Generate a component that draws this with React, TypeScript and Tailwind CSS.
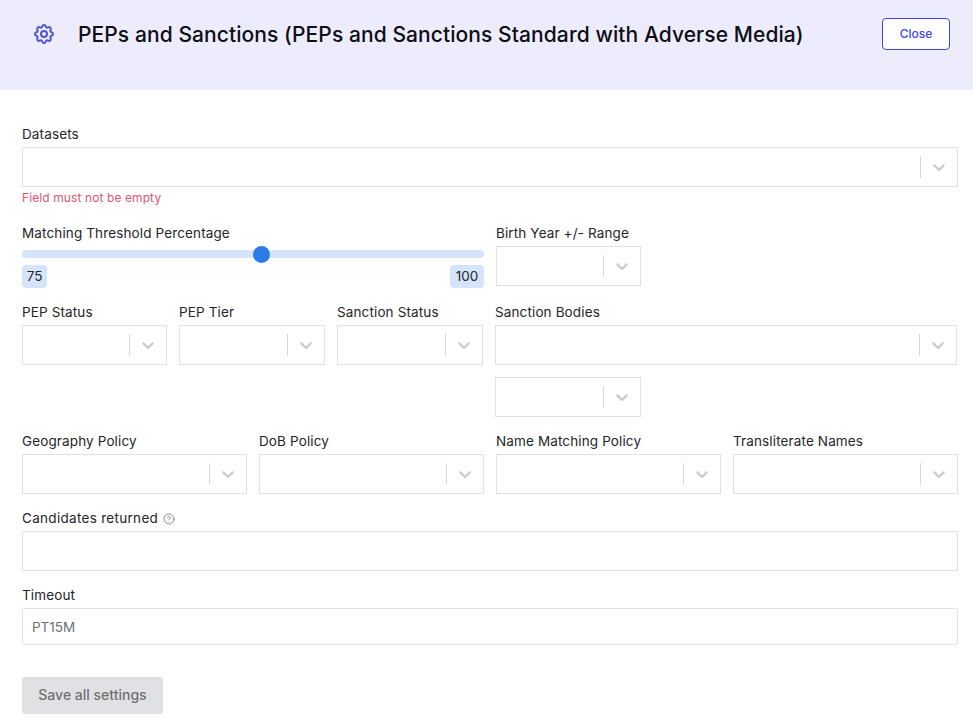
import { CircleHelp } from "lucide-react";
import { HiOutlineCog } from "react-icons/hi";

const labelClass = "block h-[23px] text-[13.5px] leading-[21px] tracking-[0.13px] text-[#25252a]";

function FakeSelect({ className = "" }: { className?: string }) {
  return (
    <div className={`flex h-10 items-center justify-end border border-[#e1e1e1] bg-white ${className}`}>
      <span className="h-[22px] w-px bg-[#d9d9d9]" />
      <span className="px-2 py-2 text-[#cccccc]">
        <svg viewBox="0 0 20 20" width="20" height="20" fill="currentColor" aria-hidden="true">
          <path d="M4.516 7.548c0.436-0.446 1.043-0.481 1.576 0l3.908 3.747 3.908-3.747c0.533-0.481 1.141-0.446 1.576 0 0.436 0.445 0.408 1.197 0 1.615-0.406 0.418-4.695 4.502-4.695 4.502-0.217 0.223-0.502 0.335-0.789 0.335s-0.572-0.112-0.791-0.335c0 0-4.287-4.084-4.695-4.502s-0.436-1.17 0-1.615z" />
        </svg>
      </span>
    </div>
  );
}

function SelectField({ label, className = "" }: { label: string; className?: string }) {
  return (
    <div className={className}>
      <label className={labelClass}>{label}</label>
      <FakeSelect />
    </div>
  );
}

export default function App() {
  return (
    <div className="min-h-[726px] bg-white font-['Inter',sans-serif]">
      <header className="flex h-[90px] items-start bg-[#edecfd] pl-[32px] pr-[23px] pt-[18px]">
        <HiOutlineCog className="mt-[4px] h-6 w-6 shrink-0 text-[#5155cf]" />
        <h1 className="ml-[22px] mt-px flex-1 text-[21px] font-medium leading-8 tracking-[0.08px] text-[#0e0e13]">
          PEPs and Sanctions (PEPs and Sanctions Standard with Adverse Media)
        </h1>
        <button className="h-8 w-[68px] rounded border border-[#3f45f0] bg-white text-[12px] font-medium text-[#3f45f0]">
          Close
        </button>
      </header>

      <main className="pl-[22px] pr-[15px] pt-[34px]">
        <div className="h-[77px]">
          <label className={labelClass}>Datasets</label>
          <FakeSelect />
          <p className="mt-[3px] text-[12px] leading-4 tracking-[0.1px] text-[#e0566f]">Field must not be empty</p>
        </div>

        <div className="mt-[22px] grid grid-cols-[462px_462px] gap-x-3">
          <div>
            <label className={labelClass}>Matching Threshold Percentage</label>
            <div className="relative mt-[4px] h-2 rounded-full bg-[#d5e4fa]">
              <span className="absolute left-[231px] top-[-4px] h-[17px] w-[17px] rounded-full bg-[#2b7be8]" />
            </div>
            <div className="mt-[7px] flex justify-between text-center text-[13.5px] leading-[23px] text-[#25252a]">
              <span className="w-[25px] rounded bg-[#d5e4fa]">75</span>
              <span className="w-[34px] rounded bg-[#d5e4fa]">100</span>
            </div>
          </div>
          <SelectField label="Birth Year +/- Range" className="w-[145px]" />
        </div>

        <div className="mt-[14px] grid grid-cols-[145px_146px_146px_462px] gap-x-3">
          <SelectField label="PEP Status" />
          <SelectField label="PEP Tier" />
          <SelectField label="Sanction Status" />
          <div>
            <SelectField label="Sanction Bodies" />
            <FakeSelect className="mt-3 w-[146px]" />
          </div>
        </div>

        <div className="mt-[14px] grid grid-cols-4 gap-x-3">
          <SelectField label="Geography Policy" />
          <SelectField label="DoB Policy" />
          <SelectField label="Name Matching Policy" />
          <SelectField label="Transliterate Names" />
        </div>

        <div className="mt-[14px]">
          <label className={`${labelClass} flex items-start gap-[5px]`}>
            <span className="tracking-[0.3px]">Candidates returned</span>
            <CircleHelp className="mt-[5px] h-3 w-3 text-[#6b6b70]" strokeWidth={1.5} />
          </label>
          <div className="h-10 border border-[#e1e1e1] bg-white" />
        </div>

        <div className="mt-[14px]">
          <label className={labelClass}>Timeout</label>
          <input
            readOnly
            value="PT15M"
            className="h-[37px] w-full rounded-[3px] border border-[#e1e1e1] px-[9px] text-[13.5px] text-[#6f6f75] outline-none"
          />
        </div>

        <button className="mt-8 h-[37px] w-[141px] rounded-[3px] bg-[#e1e1e3] pb-[2px] text-[14px] font-medium text-[#6f7076]">
          Save all settings
        </button>
      </main>
    </div>
  );
}
